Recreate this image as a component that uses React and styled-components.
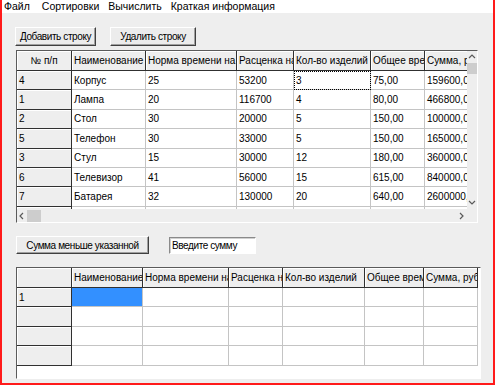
import React from 'react';
import styled, { createGlobalStyle } from 'styled-components';

const Global = createGlobalStyle`
  html, body { margin: 0; padding: 0; background: #fff; }
  body { font-family: "Liberation Sans", Arial, sans-serif; font-size: 10px; color: #000; }
`;

const dots = `
  background-color: #eeeeee;
  background-image: radial-gradient(circle, #fafafa 0.5px, transparent 0.6px);
  background-size: 4px 4px;
`;

const Window = styled.div`
  width: 495px;
  height: 385px;
  box-sizing: border-box;
  border: 2px solid #ff1a1a;
  border-top: none;
  display: flex;
  flex-direction: column;
  overflow: hidden;
`;

const MenuBar = styled.div`
  height: 13px;
  background: #fff;
  display: flex;
  align-items: center;
  gap: 9px;
  padding-left: 2px;
  font-size: 10.5px;
`;

const MenuItem = styled.span`
  line-height: 13px;
  margin-right: ${p => p.$extra || 0}px;
`;

const Form = styled.div`
  flex: 1;
  ${dots}
  padding: 14px 0 0 14px;
  display: flex;
  flex-direction: column;
`;

const ButtonRow = styled.div`
  display: flex;
  align-items: center;
  gap: ${p => p.$gap}px;
  margin: ${p => p.$margin};
`;

const Button = styled.button`
  height: ${p => p.$h}px;
  width: ${p => p.$w}px;
  box-sizing: border-box;
  padding: 0;
  font-family: inherit;
  font-size: 10px;
  letter-spacing: -0.4px;
  color: #000;
  background: #ececec;
  border: 1px solid;
  border-color: #fff #404040 #404040 #fff;
  box-shadow: inset -1px -1px 0 #a0a0a0;
`;

const Edit = styled.div`
  width: 87px;
  height: 17px;
  box-sizing: border-box;
  background: #fff;
  border: 1px solid;
  border-color: #8a8a8a #fff #fff #8a8a8a;
  box-shadow: inset 1px 1px 0 #d0d0d0;
  padding: 2px 0 0 2px;
  font-size: 10px;
  letter-spacing: -0.4px;
`;

const GridFrame = styled.div`
  width: ${p => p.$w}px;
  height: ${p => p.$h}px;
  box-sizing: border-box;
  border: 1px solid;
  border-color: #5a5a5a #fff #fff #5a5a5a;
  background: ${p => (p.$white ? '#fff' : 'transparent')};
  display: flex;
  flex-direction: column;
  overflow: hidden;
`;

const GridMain = styled.div`
  flex: 1;
  display: flex;
  min-height: 0;
`;

const Viewport = styled.div`
  flex: 1;
  overflow: hidden;
  background: #fff;
`;

const Table = styled.div`
  display: grid;
  grid-template-columns: ${p => p.$cols};
  grid-template-rows: ${p => p.$head}px;
  grid-auto-rows: ${p => p.$row}px;
`;

const BaseCell = styled.div`
  box-sizing: border-box;
  overflow: hidden;
  white-space: nowrap;
  padding: ${p => (p.$center ? '0' : '0 0 0 2px')};
  display: flex;
  align-items: center;
  justify-content: ${p => (p.$center ? 'center' : 'flex-start')};
`;

const FixedCell = styled(BaseCell)`
  ${dots}
  border-right: 1px solid #303030;
  border-bottom: 1px solid #303030;
  box-shadow: inset 1px 1px 0 #fff;
`;

const Cell = styled(BaseCell)`
  background: ${p => (p.$selected ? '#3390ff' : '#fff')};
  border-right: 1px solid #c4c4c4;
  border-bottom: 1px solid #c4c4c4;
  outline: ${p => (p.$focus ? '1px dotted #000' : 'none')};
  outline-offset: -1px;
`;

const VScroll = styled.div`
  width: 10px;
  ${dots}
  display: flex;
  flex-direction: column;
  align-items: center;
`;

const HScroll = styled.div`
  height: 13px;
  ${dots}
  display: flex;
  align-items: center;
`;

const Arrow = styled.div`
  width: 10px;
  height: 12px;
  display: flex;
  align-items: center;
  justify-content: center;
  flex-shrink: 0;
`;

const Thumb = styled.div`
  background: #cdcdcd;
  width: ${p => p.$w}px;
  height: ${p => p.$h}px;
  flex-shrink: 0;
`;

const Spacer = styled.div`
  flex: 1;
`;

const Corner = styled.div`
  width: 10px;
  height: 100%;
`;

const Chevron = ({ dir }) => {
  const pts = {
    up: '1,5 4,2 7,5',
    down: '1,2 4,5 7,2',
    left: '5,1 2,4 5,7',
    right: '2,1 5,4 2,7',
  }[dir];
  return (
    <svg width="8" height="8" viewBox="0 0 8 8">
      <polyline points={pts} fill="none" stroke="#5a5a5a" strokeWidth="1.2" />
    </svg>
  );
};

const topHead = ['№ п/п', 'Наименование изделия', 'Норма времени на 1 изделие', 'Расценка на 1 изделие', 'Кол-во изделий', 'Общее время', 'Сумма, руб.'];
const bottomHead = ['', 'Наименование изделия', 'Норма времени на 1 изделие', 'Расценка на 1 изделие', 'Кол-во изделий', 'Общее время', 'Сумма, руб.'];

const rows = [
  ['4', 'Корпус', '25', '53200', '3', '75,00', '159600,00'],
  ['1', 'Лампа', '20', '116700', '4', '80,00', '466800,00'],
  ['2', 'Стол', '30', '20000', '5', '150,00', '100000,00'],
  ['5', 'Телефон', '30', '33000', '5', '150,00', '165000,00'],
  ['3', 'Стул', '15', '30000', '12', '180,00', '360000,00'],
  ['6', 'Телевизор', '41', '56000', '15', '615,00', '840000,00'],
  ['7', 'Батарея', '32', '130000', '20', '640,00', '2600000,00'],
  ['', '', '', '', '', '', ''],
];

const bottomRows = [
  ['1', '', '', '', '', '', ''],
  ['', '', '', '', '', '', ''],
  ['', '', '', '', '', '', ''],
  ['', '', '', '', '', '', ''],
];

function TopGrid() {
  return (
    <GridFrame $w={462} $h={173}>
      <GridMain>
        <Viewport>
          <Table $cols="55px 74px 91px 57px 77px 54px 80px" $head={20} $row={19.4}>
            {topHead.map((h, i) =>
              i === 0 ? <FixedCell key={i} $center>{h}</FixedCell> : <FixedCell key={i}>{h}</FixedCell>
            )}
            {rows.map((r, ri) =>
              r.map((v, ci) =>
                ci === 0 ? (
                  <FixedCell key={`${ri}-${ci}`}>{v}</FixedCell>
                ) : (
                  <Cell key={`${ri}-${ci}`} $focus={ri === 0 && ci === 4}>{v}</Cell>
                )
              )
            )}
          </Table>
        </Viewport>
        <VScroll>
          <Arrow><Chevron dir="up" /></Arrow>
          <Thumb $w={10} $h={11} />
          <Spacer />
          <Arrow><Chevron dir="down" /></Arrow>
        </VScroll>
      </GridMain>
      <HScroll>
        <Arrow><Chevron dir="left" /></Arrow>
        <Thumb $w={14} $h={12} />
        <Spacer />
        <Arrow><Chevron dir="right" /></Arrow>
        <Corner />
      </HScroll>
    </GridFrame>
  );
}

function BottomGrid() {
  return (
    <GridFrame $w={465} $h={112} $white>
      <Table $cols="55px 71px 86px 54px 82px 59px 54px" $head={20} $row={19.4}>
        {bottomHead.map((h, i) => <FixedCell key={i}>{h}</FixedCell>)}
        {bottomRows.map((r, ri) =>
          r.map((v, ci) =>
            ci === 0 ? (
              <FixedCell key={`${ri}-${ci}`}>{v}</FixedCell>
            ) : (
              <Cell key={`${ri}-${ci}`} $selected={ri === 0 && ci === 1}>{v}</Cell>
            )
          )
        )}
      </Table>
    </GridFrame>
  );
}

export default function App() {
  return (
    <>
      <Global />
      <Window>
        <MenuBar>
          <MenuItem $extra={3}>Файл</MenuItem>
          <MenuItem>Сортировки</MenuItem>
          <MenuItem>Вычислить</MenuItem>
          <MenuItem>Краткая информация</MenuItem>
        </MenuBar>
        <Form>
          <ButtonRow $gap={14} $margin="0 0 4px -1px">
            <Button $w={81} $h={19}>Добавить строку</Button>
            <Button $w={86} $h={19}>Удалить строку</Button>
          </ButtonRow>
          <TopGrid />
          <ButtonRow $gap={20} $margin="13px 0 13px 0">
            <Button $w={133} $h={18}>Сумма меньше указанной</Button>
            <Edit>Введите сумму</Edit>
          </ButtonRow>
          <BottomGrid />
        </Form>
      </Window>
    </>
  );
}
